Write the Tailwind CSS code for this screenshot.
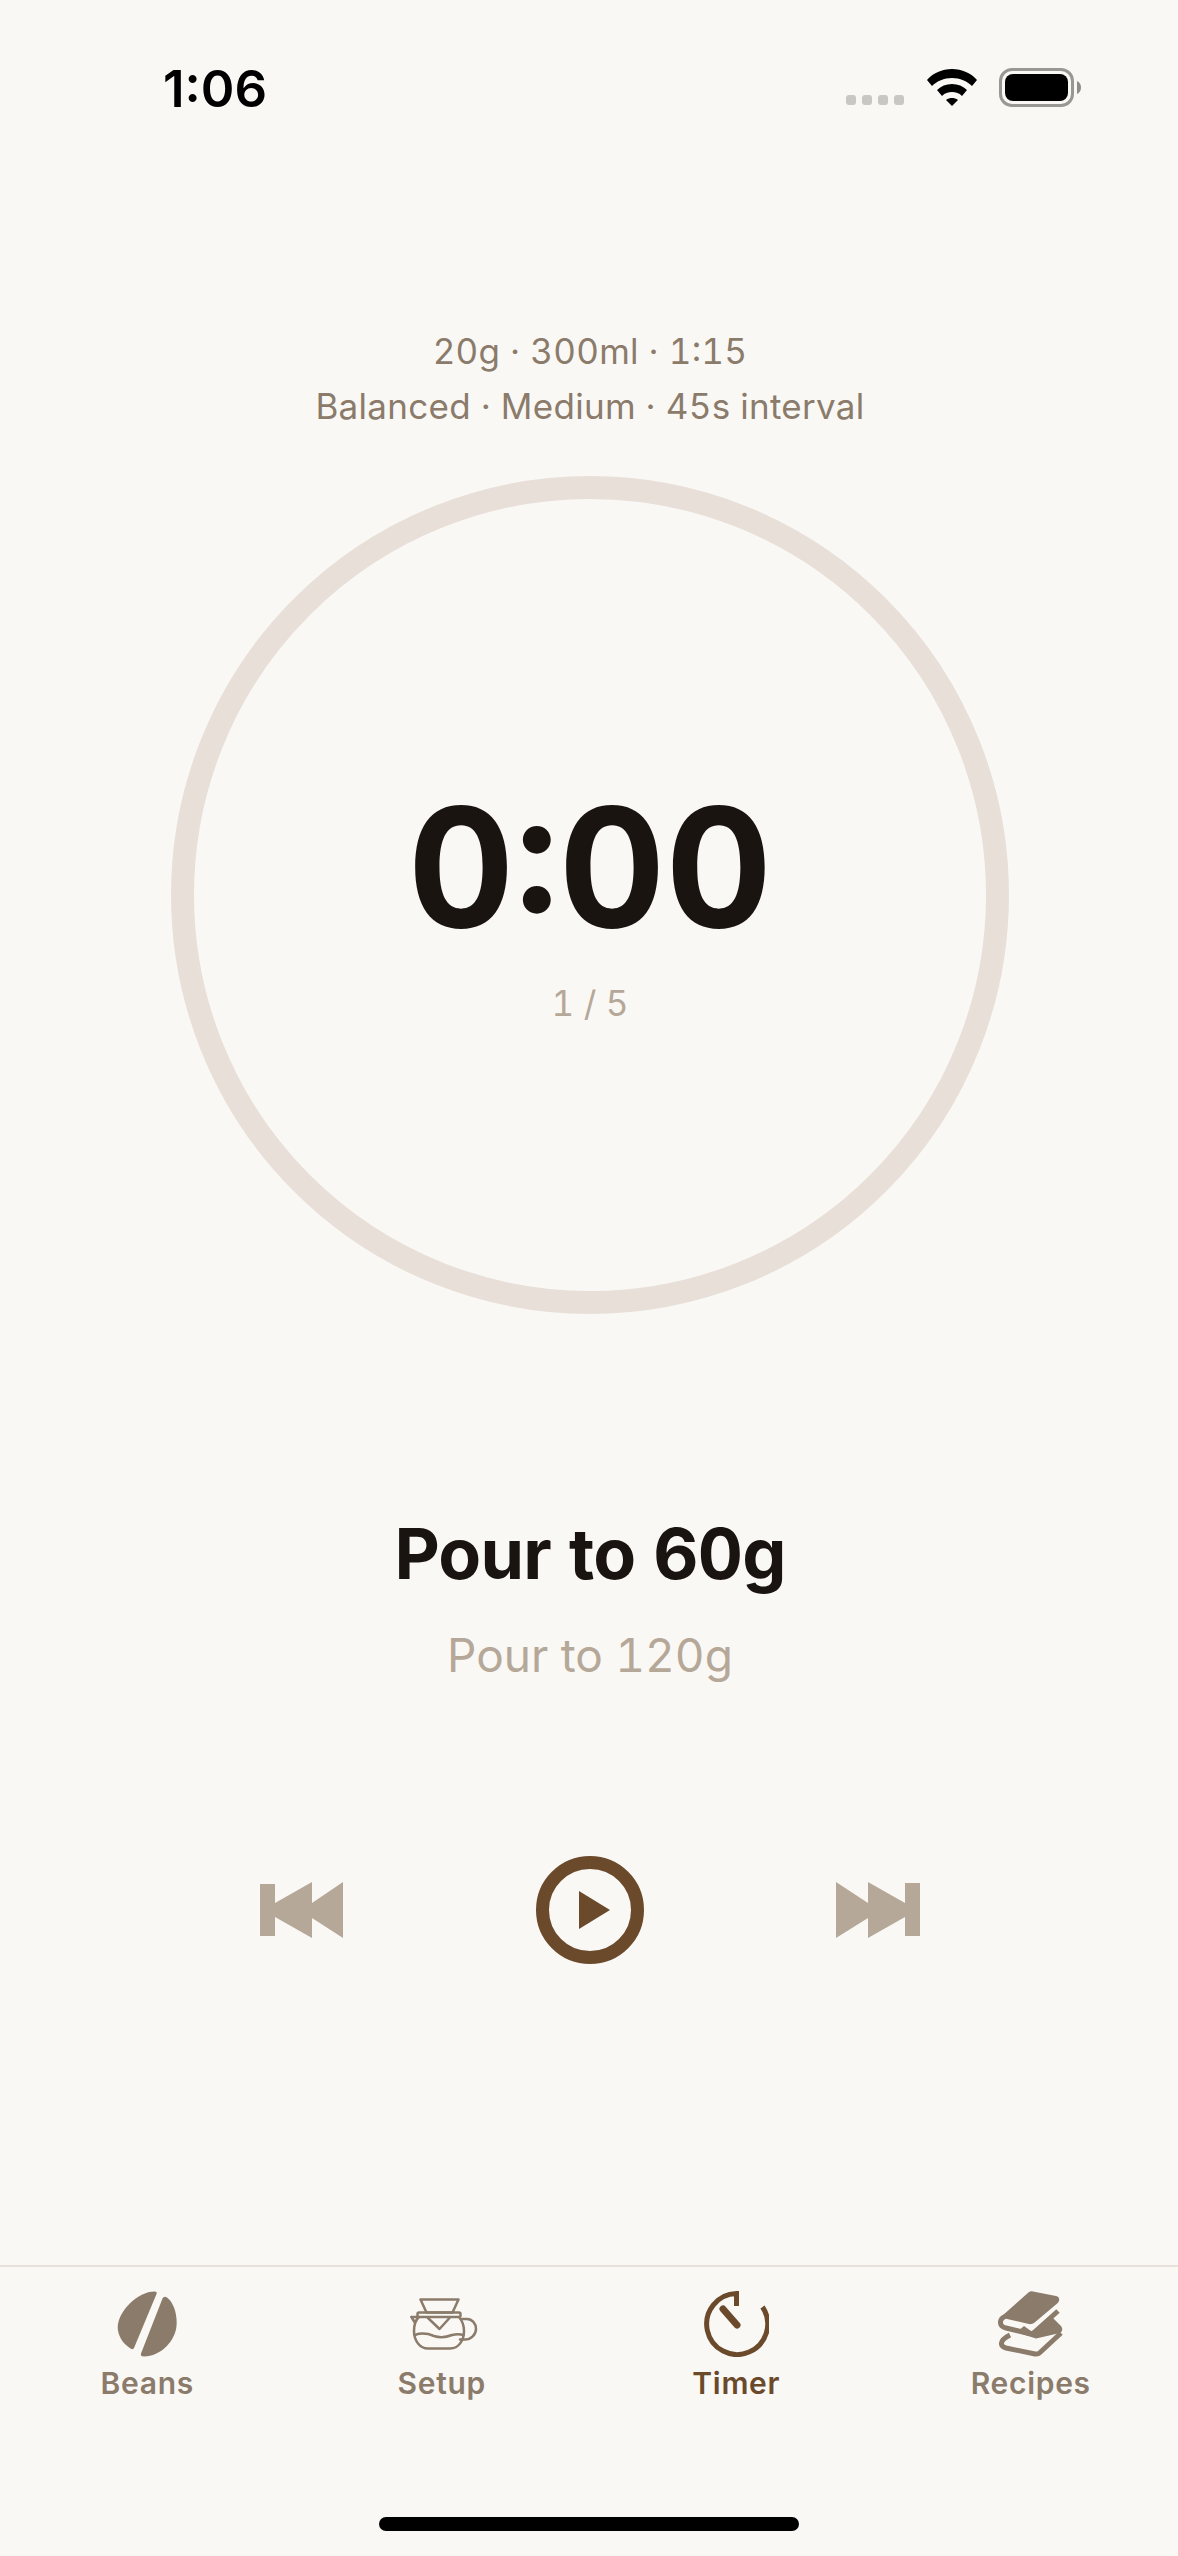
<!DOCTYPE html>
<html lang="en">
<head>
  <meta charset="UTF-8">
  <meta name="viewport" content="width=device-width, initial-scale=1">
  <title>Timer</title>
  <script src="https://cdn.jsdelivr.net/npm/@tailwindcss/browser@4"></script>
</head>
<body class="bg-[#faf8f5] font-[Inter,sans-serif] text-[#1a1410] w-[1178px] h-[2556px] flex flex-col overflow-hidden">

<!-- Status bar -->
<header class="h-[174px] pt-[60px] pl-[163px] pr-[97px] flex items-start justify-between">
  <span class="text-[51px] leading-[58px] font-semibold text-black [font-feature-settings:'case']">1:06</span>
  <div class="flex items-end mt-[8px]">
    <div class="flex gap-[6px] mb-[1px]">
      <span class="w-[10px] h-[10px] rounded-[3px] bg-[#c9c7c4]"></span>
      <span class="w-[10px] h-[10px] rounded-[3px] bg-[#c9c7c4]"></span>
      <span class="w-[10px] h-[10px] rounded-[3px] bg-[#c9c7c4]"></span>
      <span class="w-[10px] h-[10px] rounded-[3px] bg-[#c9c7c4]"></span>
    </div>
    <svg class="ml-[23px]" width="50" height="37" viewBox="0 0 50 37" fill="#000">
      <path d="M0 11C6 4 15 0 25 0C35 0 44 4 50 11L45 17C40 12 33 9 25 9C17 9 10 12 5 17Z"/>
      <path d="M10 21C14 17 19 15 25 15C31 15 36 17 40 21L35 27C32 24 29 23 25 23C21 23 18 24 15 27Z"/>
      <path d="M19 31C21 29.5 23 29 25 29C27 29 29 29.5 31 31L25 37Z"/>
    </svg>
    <div class="flex items-center ml-[22px] -mb-[1px]">
      <div class="w-[75px] h-[39px] rounded-[13px] border-[3px] border-[#999794] p-[3px]">
        <div class="w-full h-full rounded-[8px] bg-black"></div>
      </div>
      <svg class="ml-[3px]" width="4" height="13" viewBox="0 0 4 13" fill="#8f8d8a"><path d="M0 0C2.500 1 4 3.500 4 6.500C4 9.500 2.500 12 0 13Z"/></svg>
    </div>
  </div>
</header>

<main class="flex-1 flex flex-col items-center tabular-nums pl-[2px]">
  <!-- Brew summary -->
  <div class="mt-[150px] text-center text-[35px] leading-[55px] tracking-[0.3px] text-[#8b7b6b] [font-feature-settings:'case']">
    <p>20g · 300ml · 1:15</p>
    <p>Balanced · Medium · 45s interval</p>
  </div>

  <!-- Dial -->
  <div class="mt-[42px] w-[838px] h-[838px] rounded-full border-[23px] border-[#e8dfd8] flex flex-col items-center">
    <div class="mt-[273px] text-[165px] leading-[190px] font-bold [font-feature-settings:'case']">0:00</div>
    <div class="mt-[19px] text-[35px] leading-[44px] text-[#b5a898]">1 / 5</div>
  </div>

  <!-- Steps -->
  <h1 class="mt-[198px] text-[70px] leading-[84px] font-bold tracking-[-0.8px]">Pour to 60g</h1>
  <p class="mt-[30px] text-[46px] leading-[58px] text-[#b5a898]">Pour to 120g</p>

  <!-- Controls -->
  <div class="mt-[172px] w-[660px] flex items-center justify-between">
    <svg width="84" height="58" viewBox="0 0 84 58" fill="#b5a898">
      <path d="M0 3H15V22L52 1V22L83 1V57L52 37V57L15 36V55H0Z"/>
    </svg>
    <svg width="108" height="108" viewBox="0 0 108 108" fill="#6b4a2b">
      <circle cx="54" cy="54" r="47.500" fill="none" stroke="#6b4a2b" stroke-width="13"/>
      <path d="M43 35L74 54L43 73Z"/>
    </svg>
    <svg width="84" height="58" viewBox="0 0 84 58" fill="#b5a898">
      <path d="M84 2H69V22L32 1V22L0 1V57L32 37V57L69 36V55H84Z"/>
    </svg>
  </div>
</main>

<!-- Tab bar -->
<nav class="h-[291px] border-t-[2px] border-[#e8e0da] flex flex-col">
  <div class="grid grid-cols-4 text-[30px] leading-[36px] font-[575] tracking-[0.7px] text-[#8b7b6b] pt-[24px]">
    <a class="flex flex-col items-center gap-[8px]">
      <svg width="66" height="66" viewBox="0 0 66 66" fill="#8b7b6b">
        <path d="M42.500 3L20 57Q19 59 16.500 57.500C8 52 3.700 44 3.700 36C4 20 24 .5 40.500 .5Q43.500 .5 42.500 3Z"/>
        <path d="M48.500 7.500Q50 4.500 53 6.500C59 11 62.700 21 62.700 32C62.700 50 46 65.500 30 65.500Q26 65.500 27 62.500Z"/>
      </svg>
      <span>Beans</span>
    </a>
    <a class="flex flex-col items-center gap-[8px]">
      <svg class="overflow-visible" width="66" height="66" viewBox="0 0 66 66" fill="none" stroke="#8b7b6b" stroke-width="2.500" stroke-linejoin="round" stroke-linecap="round">
        <path d="M11.500 8.500H49.500L43.500 21.500H17.500Z"/>
        <rect x="8.500" y="21.500" width="43" height="4.500" rx="1.500"/>
        <path d="M2.500 26H10C6.500 29 5 34 5 40C5 50 11 57.500 19 57.500H41C50 57.500 55 49 55 40C55 34 53 29.500 50 26"/>
        <path d="M2.500 26L5.500 31"/>
        <path d="M53 28H58C63 28 67 32.500 67 38C67 43.500 62 48.500 56 48.500H51"/>
        <path d="M19 27L30.500 38L40.500 27"/>
        <path d="M6 44C14 41 20 43 25 45C31 47 38 46 43 44C47 43 51 43 54.500 44"/>
      </svg>
      <span>Setup</span>
    </a>
    <a class="flex flex-col items-center gap-[8px] text-[#6b4a2b]">
      <svg width="66" height="66" viewBox="0 0 66 66" fill="none" stroke="#6b4a2b">
        <path d="M59.500 16A30.500 30.500 0 1 1 33.500 2.500V15" stroke-width="5"/>
        <path d="M20 18L34 34" stroke-width="7" stroke-linecap="round"/>
      </svg>
      <span>Timer</span>
    </a>
    <a class="flex flex-col items-center gap-[8px]">
      <svg width="66" height="66" viewBox="0 0 66 66" fill="#8b7b6b">
        <path d="M31 1Q33 0 35 .5L58 5Q62 6 61 10Q60 12 58 13.500L36 32Q34 33.500 31 33L7 27.500L4 25Z"/>
        <path d="M60 20L36 41.500Q34 43 31 42.500L8 37Q2 35.500 2.500 30.500Q3 27 7 25.500" fill="none" stroke="#8b7b6b" stroke-width="5"/>
        <path d="M54 26L63 35Q66 39 62 42L38 47.500L27 44L19 41L26 35L33 40Q35 41 37 39.500L51 29Z"/>
        <path d="M63 42L42 61.500Q40 63.500 37 63L8 57Q3 55.500 3.500 52Q4 48 12 44" fill="none" stroke="#8b7b6b" stroke-width="5"/>
      </svg>
      <span>Recipes</span>
    </a>
  </div>
  <div class="mt-[116px] mx-auto w-[420px] h-[14px] rounded-full bg-black"></div>
</nav>

</body>
</html>
